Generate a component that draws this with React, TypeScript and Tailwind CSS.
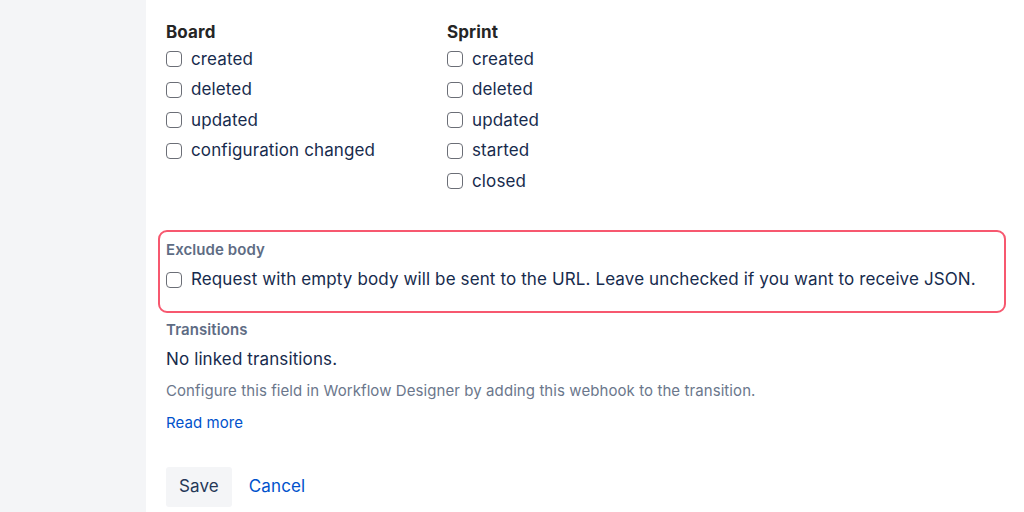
import React from "react";

function Box() {
  return (
    <span className="inline-block w-4 h-4 shrink-0 rounded-[4px] border-[1.5px] border-[#6b6e76] bg-white" />
  );
}

function Option({ label }: { label: string }) {
  return (
    <label className="flex items-center gap-[9px] h-[30.5px]">
      <Box />
      <span>{label}</span>
    </label>
  );
}

const board = ["created", "deleted", "updated", "configuration changed"];
const sprint = ["created", "deleted", "updated", "started", "closed"];

export default function App() {
  return (
    <div
      className="flex w-[1024px] h-[512px] overflow-hidden bg-white text-[#172b4d] text-[17px] tracking-[0.12px]"
      style={{ fontFamily: "Inter, 'Noto Sans', sans-serif" }}
    >
      <aside className="w-[146px] shrink-0 bg-[#f4f5f7]" />
      <main className="flex-1 pl-5 pr-[18px] pt-[22px]">
        <div className="flex">
          <div className="w-[281px]">
            <h3 className="font-bold text-[#252525] leading-5 mb-[2px]">Board</h3>
            {board.map((b) => (
              <Option key={b} label={b} />
            ))}
          </div>
          <div>
            <h3 className="font-bold text-[#252525] leading-5 mb-[2px]">Sprint</h3>
            {sprint.map((s) => (
              <Option key={s} label={s} />
            ))}
          </div>
        </div>

        <div className="mt-[33px] -ml-2 border-2 border-[#f7586f] rounded-[9px] pl-[6px] pt-[8px] pb-[16px]">
          <div className="text-[15px] tracking-[0.08px] font-semibold text-[#5e6c84] leading-5 mb-[5px]">Exclude body</div>
          <Option label="Request with empty body will be sent to the URL. Leave unchecked if you want to receive JSON." />
        </div>

        <div className="mt-[7px] text-[15px] tracking-[0.08px] font-semibold text-[#5e6c84] leading-5">Transitions</div>
        <div className="mt-[9px] leading-5">No linked transitions.</div>
        <div className="mt-[12px] text-[15px] tracking-[0.08px] text-[#6b778c] leading-5">
          Configure this field in Workflow Designer by adding this webhook to the transition.
        </div>
        <a className="block mt-[12px] text-[15px] tracking-[0.08px] text-[#0052cc] leading-5">Read more</a>

        <div className="mt-[34px] flex items-center gap-[17px]">
          <button className="h-10 px-[13px] rounded-[3px] bg-[#f4f5f7] text-[#253858]">Save</button>
          <a className="text-[#0052cc]">Cancel</a>
        </div>
      </main>
    </div>
  );
}
